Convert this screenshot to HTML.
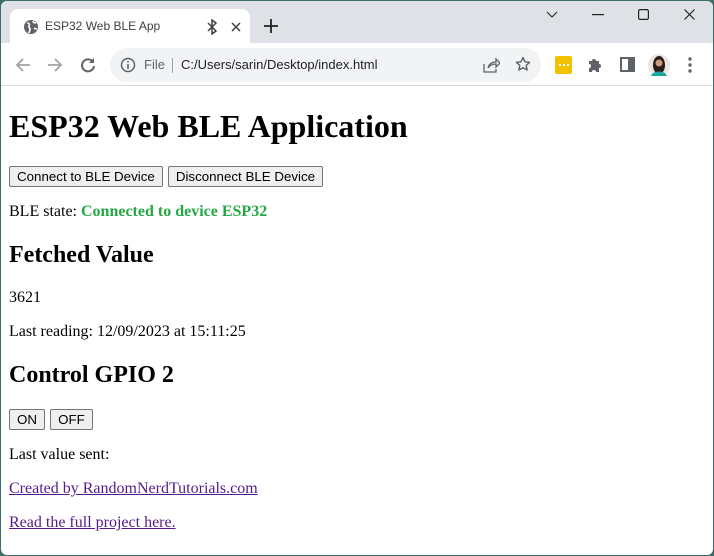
<!DOCTYPE html>
<html><head><meta charset="utf-8"><style>
*{box-sizing:border-box}
html,body{margin:0;padding:0}
body{width:714px;height:556px;overflow:hidden;background:#3d6e6c;font-family:"Liberation Serif",serif}
.win{position:absolute;left:1px;top:1px;width:712px;height:554px;background:#fff;border-radius:6px 6px 6px 6px;overflow:hidden}
.tabbar{position:absolute;left:0;top:0;width:712px;height:42px;background:#dee1e6}
.tab{position:absolute;left:9px;top:8px;width:240px;height:36px;background:#fff;border-radius:8px 8px 0 0}
.tab .t{position:absolute;left:35px;top:10px;font:12px "Liberation Sans",sans-serif;color:#3c4043}
.tb{position:absolute;left:0;top:42px;width:712px;height:43px;background:#fff;border-bottom:1px solid #dadce0}
.omni{position:absolute;left:109px;top:5px;width:431px;height:34px;background:#f1f3f4;border-radius:17px}
.omni .f{position:absolute;left:34px;top:9px;font:13px "Liberation Sans",sans-serif;color:#5f6368}
.omni .u{position:absolute;left:71px;top:9px;font:13px "Liberation Sans",sans-serif;color:#202124}
.omni .sep{position:absolute;left:62px;top:10px;width:1px;height:15px;background:#9aa0a6}
svg{position:absolute}
.page{position:absolute;left:0;top:86px;width:712px;padding:0 8px;color:#000;font-size:16px}
h1{font-size:32px;margin:21px 0;line-height:37px}
h2{font-size:24px;margin:20px 0;line-height:28px}
p{margin:16px 0;line-height:18px}
button{font:13.33px "Liberation Sans",sans-serif;height:21px;padding:1px 7px;background:#efefef;border:1px solid #767676;border-radius:2px;color:#000;margin:0 1px 0 0}
.on{width:36px;padding:1px 0}
.off{width:43px;padding:1px 0}
a{color:#551a8b;text-decoration:underline}
.g{color:#24a843;font-weight:bold}
</style></head><body><div class="win">
<div class="tabbar">
<div class="tab"><svg style="left:13px;top:10px" width="16" height="16" viewBox="0 0 16 16"><circle cx="8" cy="8" r="7" fill="#5f6368"/><path d="M4 4c2 0 3 1 2 3s2 2 1 4-1 3-1 3M10 2c0 2 2 2 3 2M11 9c1 1 2 1 3 1" stroke="#fff" stroke-width="1.6" fill="none"/></svg>
<div class="t">ESP32 Web BLE App</div>
<svg style="left:196px;top:10px" width="12" height="16" viewBox="0 0 12 16"><path d="M2 4l8 8-4 3V1l4 3-8 8" stroke="#3c4043" stroke-width="1.5" fill="none"/></svg>
<svg style="left:221px;top:13px" width="10" height="10" viewBox="0 0 10 10"><path d="M1 1l8 8M9 1l-8 8" stroke="#3c4043" stroke-width="1.5"/></svg>
</div>
<svg style="left:263px;top:18px" width="14" height="14" viewBox="0 0 14 14"><path d="M7 0v14M0 7h14" stroke="#202124" stroke-width="1.8"/></svg>
<svg style="left:545px;top:10px" width="12" height="8" viewBox="0 0 12 8"><path d="M1 1l5 5 5-5" stroke="#202124" stroke-width="1.1" fill="none"/></svg>
<svg style="left:591px;top:13px" width="12" height="2"><rect width="12" height="1.2" fill="#202124"/></svg>
<svg style="left:637px;top:8px" width="11" height="11"><rect x=".6" y=".6" width="9.8" height="9.8" rx="1.5" fill="none" stroke="#202124" stroke-width="1.2"/></svg>
<svg style="left:683px;top:8px" width="11" height="11"><path d="M.5 .5l10 10M10.5 .5l-10 10" stroke="#202124" stroke-width="1.2"/></svg>
</div>
<div class="tb">
<svg style="left:14px;top:14px" width="16" height="16" viewBox="0 0 16 16"><path d="M15 8H2M8 2L2 8l6 6" stroke="#a0a3a8" stroke-width="1.8" fill="none"/></svg>
<svg style="left:46px;top:14px" width="16" height="16" viewBox="0 0 16 16"><path d="M1 8h13M8 2l6 6-6 6" stroke="#a0a3a8" stroke-width="1.8" fill="none"/></svg>
<svg style="left:79px;top:14px" width="16" height="16" viewBox="0 0 16 16"><path d="M13 5A6 6 0 1 0 14 9" stroke="#5f6368" stroke-width="2" fill="none"/><path d="M14 1v5H9z" fill="#5f6368"/></svg>
<div class="omni">
<svg style="left:10px;top:9px" width="16" height="16" viewBox="0 0 16 16"><circle cx="8" cy="8" r="6.5" stroke="#5f6368" stroke-width="1.5" fill="none"/><path d="M8 7v5M8 4v1.5" stroke="#5f6368" stroke-width="1.6"/></svg>
<div class="f">File</div><div class="sep"></div><div class="u">C:/Users/sarin/Desktop/index.html</div>
<svg style="left:373px;top:9px" width="17" height="16" viewBox="0 0 17 16"><path d="M1 7v8h12v-3M5 11c1-4 4-6 8-6V2l4 4-4 4V7c-3 0-6 1-8 4z" stroke="#5f6368" stroke-width="1.3" fill="none"/></svg>
<svg style="left:405px;top:8px" width="16" height="16" viewBox="0 0 16 16"><path d="M8 1.5l2 4.3 4.6.5-3.4 3.1 1 4.6L8 11.7 3.8 14l1-4.6L1.4 6.3 6 5.8z" stroke="#5f6368" stroke-width="1.4" fill="none" stroke-linejoin="round"/></svg>
</div>
<svg style="left:554px;top:13px" width="17" height="18"><rect width="17" height="18" rx="2" fill="#f2c200"/><rect x="4" y="8" width="2" height="2" fill="#fff"/><rect x="8" y="8" width="2" height="2" fill="#fff"/><rect x="12" y="8" width="2" height="2" fill="#fff"/></svg>
<svg style="left:586px;top:13px" width="16" height="17" viewBox="0 0 16 17"><path d="M2 5h3a2 2 0 1 1 4 0h3v3a2 2 0 1 1 0 4v4H9a2 2 0 1 0-4 0H2v-4a2 2 0 1 0 0-4z" fill="#5f6368"/></svg>
<svg style="left:619px;top:14px" width="15" height="15"><rect x="1" y="1" width="13" height="13" fill="none" stroke="#5f6368" stroke-width="2"/><rect x="8" y="1" width="6" height="13" fill="#5f6368"/></svg>
<svg style="left:647px;top:11px" width="22" height="22"><circle cx="11" cy="11" r="11" fill="#e8e6e3"/><ellipse cx="11" cy="11" rx="6" ry="9" fill="#2b1c17"/><circle cx="11" cy="9" r="3.5" fill="#c99a7c"/><path d="M3 22c2-6 14-6 16 0z" fill="#17a5a0"/></svg>
<svg style="left:687px;top:14px" width="4" height="16"><circle cx="2" cy="2" r="1.7" fill="#5f6368"/><circle cx="2" cy="8" r="1.7" fill="#5f6368"/><circle cx="2" cy="14" r="1.7" fill="#5f6368"/></svg>
</div>
<div class="page">
<h1>ESP32 Web BLE Application</h1>
<button>Connect to BLE Device</button> <button>Disconnect BLE Device</button>
<p>BLE state: <span class="g">Connected to device ESP32</span></p>
<h2>Fetched Value</h2>
<p>3621</p>
<p>Last reading: 12/09/2023 at 15:11:25</p>
<h2>Control GPIO 2</h2>
<button class="on">ON</button> <button class="off">OFF</button>
<p>Last value sent: </p>
<p><a>Created by RandomNerdTutorials.com</a></p>
<p><a>Read the full project here.</a></p>
</div>
</div></body></html>
